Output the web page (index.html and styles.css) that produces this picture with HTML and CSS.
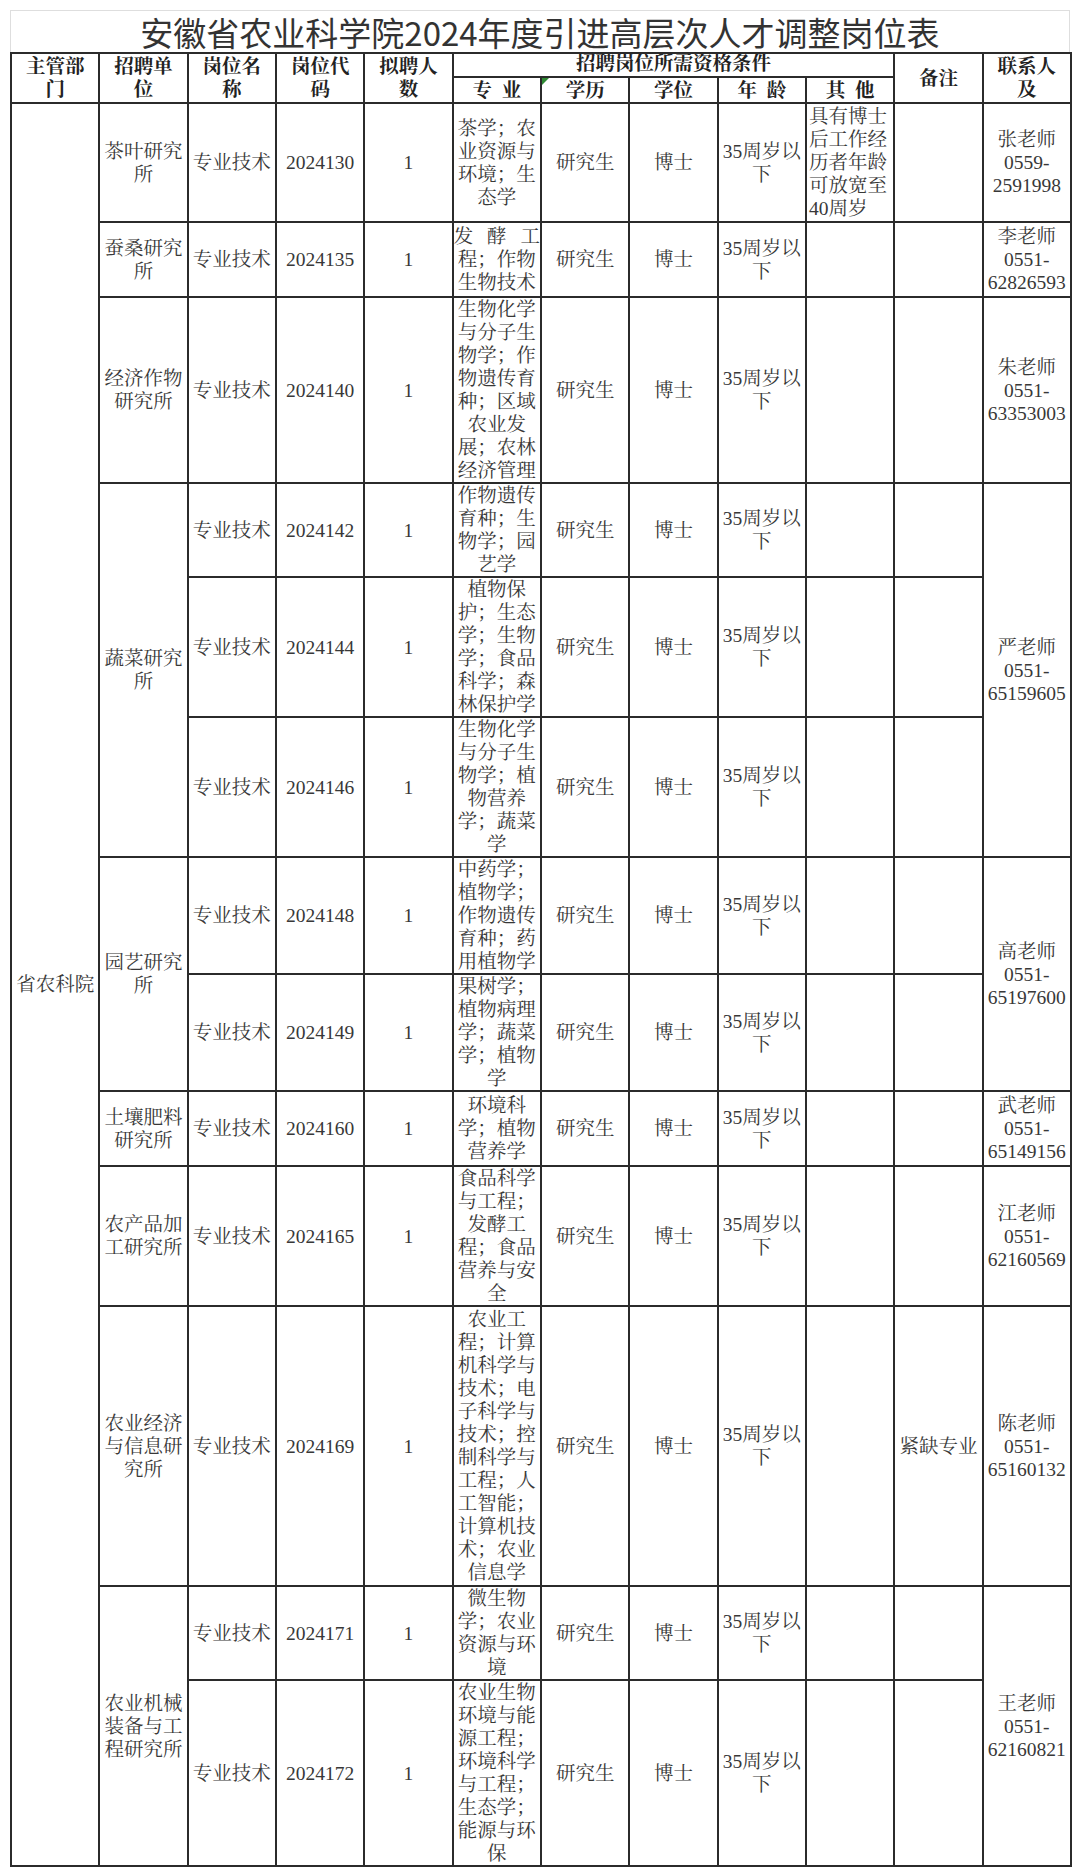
FILE: index.html
```html
<!DOCTYPE html>
<html lang="zh-CN">
<head>
<meta charset="utf-8">
<title>安徽省农业科学院2024年度引进高层次人才调整岗位表</title>
<link rel="stylesheet" href="styles.css">
</head>
<body>
<div class="page">
  <div class="title">安徽省农业科学院2024年度引进高层次人才调整岗位表</div>
  <table class="grid">
    <colgroup>
      <col class="col"><col class="col"><col class="col"><col class="col"><col class="col"><col class="col">
      <col class="col"><col class="col"><col class="col"><col class="col"><col class="col"><col class="col">
    </colgroup>
    <thead>
      <tr class="h24">
        <th rowspan="2">主管部<br>门</th>
        <th rowspan="2">招聘单<br>位</th>
        <th rowspan="2">岗位名<br>称</th>
        <th rowspan="2">岗位代<br>码</th>
        <th rowspan="2">拟聘人<br>数</th>
        <th colspan="5" class="group">招聘岗位所需资格条件</th>
        <th rowspan="2">备注</th>
        <th rowspan="2">联系人<br>及</th>
      </tr>
      <tr class="h26">
        <th>专&ensp;业</th>
        <th class="mark">学历</th>
        <th>学位</th>
        <th>年&ensp;龄</th>
        <th>其&ensp;他</th>
      </tr>
    </thead>
    <tbody>
      <tr class="h119">
        <td rowspan="13">省农科院</td>
        <td>茶叶研究<br>所</td>
        <td>专业技术</td>
        <td>2024130</td>
        <td>1</td>
        <td>茶学；农<br>业资源与<br>环境；生<br>态学</td>
        <td>研究生</td>
        <td>博士</td>
        <td>35周岁以<br>下</td>
        <td class="left">具有博士<br>后工作经<br>历者年龄<br>可放宽至<br>40周岁</td>
        <td></td>
        <td>张老师<br>0559-<br>2591998</td>
      </tr>
      <tr class="h75">
        <td>蚕桑研究<br>所</td>
        <td>专业技术</td>
        <td>2024135</td>
        <td>1</td>
        <td><span class="spread">发酵工</span>程；作物<br>生物技术</td>
        <td>研究生</td>
        <td>博士</td>
        <td>35周岁以<br>下</td>
        <td></td>
        <td></td>
        <td>李老师<br>0551-<br>62826593</td>
      </tr>
      <tr class="h186">
        <td>经济作物<br>研究所</td>
        <td>专业技术</td>
        <td>2024140</td>
        <td>1</td>
        <td>生物化学<br>与分子生<br>物学；作<br>物遗传育<br>种；区域<br>农业发<br>展；农林<br>经济管理</td>
        <td>研究生</td>
        <td>博士</td>
        <td>35周岁以<br>下</td>
        <td></td>
        <td></td>
        <td>朱老师<br>0551-<br>63353003</td>
      </tr>
      <tr class="h93">
        <td rowspan="3">蔬菜研究<br>所</td>
        <td>专业技术</td>
        <td>2024142</td>
        <td>1</td>
        <td>作物遗传<br>育种；生<br>物学；园<br>艺学</td>
        <td>研究生</td>
        <td>博士</td>
        <td>35周岁以<br>下</td>
        <td></td>
        <td></td>
        <td rowspan="3">严老师<br>0551-<br>65159605</td>
      </tr>
      <tr class="h140">
        <td>专业技术</td>
        <td>2024144</td>
        <td>1</td>
        <td>植物保<br>护；生态<br>学；生物<br>学；食品<br>科学；森<br>林保护学</td>
        <td>研究生</td>
        <td>博士</td>
        <td>35周岁以<br>下</td>
        <td></td>
        <td></td>
      </tr>
      <tr class="h140">
        <td>专业技术</td>
        <td>2024146</td>
        <td>1</td>
        <td>生物化学<br>与分子生<br>物学；植<br>物营养<br>学；蔬菜<br>学</td>
        <td>研究生</td>
        <td>博士</td>
        <td>35周岁以<br>下</td>
        <td></td>
        <td></td>
      </tr>
      <tr class="h117">
        <td rowspan="2">园艺研究<br>所</td>
        <td>专业技术</td>
        <td>2024148</td>
        <td>1</td>
        <td>中药学；<br>植物学；<br>作物遗传<br>育种；药<br>用植物学</td>
        <td>研究生</td>
        <td>博士</td>
        <td>35周岁以<br>下</td>
        <td></td>
        <td></td>
        <td rowspan="2">高老师<br>0551-<br>65197600</td>
      </tr>
      <tr class="h116">
        <td>专业技术</td>
        <td>2024149</td>
        <td>1</td>
        <td>果树学；<br>植物病理<br>学；蔬菜<br>学；植物<br>学</td>
        <td>研究生</td>
        <td>博士</td>
        <td>35周岁以<br>下</td>
        <td></td>
        <td></td>
      </tr>
      <tr class="h75">
        <td>土壤肥料<br>研究所</td>
        <td>专业技术</td>
        <td>2024160</td>
        <td>1</td>
        <td>环境科<br>学；植物<br>营养学</td>
        <td>研究生</td>
        <td>博士</td>
        <td>35周岁以<br>下</td>
        <td></td>
        <td></td>
        <td>武老师<br>0551-<br>65149156</td>
      </tr>
      <tr class="h140">
        <td>农产品加<br>工研究所</td>
        <td>专业技术</td>
        <td>2024165</td>
        <td>1</td>
        <td>食品科学<br>与工程；<br>发酵工<br>程；食品<br>营养与安<br>全</td>
        <td>研究生</td>
        <td>博士</td>
        <td>35周岁以<br>下</td>
        <td></td>
        <td></td>
        <td>江老师<br>0551-<br>62160569</td>
      </tr>
      <tr class="h280">
        <td>农业经济<br>与信息研<br>究所</td>
        <td>专业技术</td>
        <td>2024169</td>
        <td>1</td>
        <td>农业工<br>程；计算<br>机科学与<br>技术；电<br>子科学与<br>技术；控<br>制科学与<br>工程；人<br>工智能；<br>计算机技<br>术；农业<br>信息学</td>
        <td>研究生</td>
        <td>博士</td>
        <td>35周岁以<br>下</td>
        <td></td>
        <td>紧缺专业</td>
        <td>陈老师<br>0551-<br>65160132</td>
      </tr>
      <tr class="h94">
        <td rowspan="2">农业机械<br>装备与工<br>程研究所</td>
        <td>专业技术</td>
        <td>2024171</td>
        <td>1</td>
        <td>微生物<br>学；农业<br>资源与环<br>境</td>
        <td>研究生</td>
        <td>博士</td>
        <td>35周岁以<br>下</td>
        <td></td>
        <td></td>
        <td rowspan="2">王老师<br>0551-<br>62160821</td>
      </tr>
      <tr class="h186">
        <td>专业技术</td>
        <td>2024172</td>
        <td>1</td>
        <td>农业生物<br>环境与能<br>源工程；<br>环境科学<br>与工程；<br>生态学；<br>能源与环<br>保</td>
        <td>研究生</td>
        <td>博士</td>
        <td>35周岁以<br>下</td>
        <td></td>
        <td></td>
      </tr>
    </tbody>
  </table>
</div>
</body>
</html>
```

FILE: styles.css
```css
html, body {
  margin: 0;
  padding: 0;
  background: #ffffff;
}

.page {
  padding: 10px 10px 0 10px;
}

.title {
  box-sizing: border-box;
  width: 1060px;
  height: 42px;
  border: 1px solid #dedede;
  border-bottom: none;
  font-family: "Noto Sans CJK SC", "Noto Sans", sans-serif;
  font-size: 33px;
  line-height: 42px;
  text-align: center;
  color: #333333;
  white-space: nowrap;
}

.grid {
  border-collapse: collapse;
  table-layout: fixed;
  width: 1060px;
  font-family: "Liberation Serif", "Noto Serif CJK SC", "Noto Sans CJK SC", serif;
  font-size: 19.5px;
  line-height: 23px;
  color: #383838;
}

.col {
  width: 88.33px;
}

.grid th,
.grid td {
  border: 2px solid #2b2b2b;
  padding: 0;
  text-align: center;
  vertical-align: middle;
  white-space: nowrap;
  overflow: hidden;
}

.grid th {
  font-weight: bold;
  color: #222222;
}

.grid th.group {
  line-height: 20px;
  vertical-align: top;
}

.grid th.mark {
  position: relative;
}

.grid th.mark::before {
  content: "";
  position: absolute;
  left: 0;
  top: 0;
  width: 0;
  height: 0;
  border-top: 7px solid #2f8a34;
  border-right: 7px solid transparent;
}

.grid td.left {
  text-align: left;
  padding-left: 2px;
}

.spread {
  display: block;
  text-align: justify;
  text-align-last: justify;
}

.h24 { height: 24px; }
.h26 { height: 26px; }
.h75 { height: 75px; }
.h93 { height: 93px; }
.h94 { height: 94px; }
.h116 { height: 116px; }
.h117 { height: 117px; }
.h119 { height: 119px; }
.h140 { height: 140px; }
.h186 { height: 186px; }
.h280 { height: 280px; }
```
